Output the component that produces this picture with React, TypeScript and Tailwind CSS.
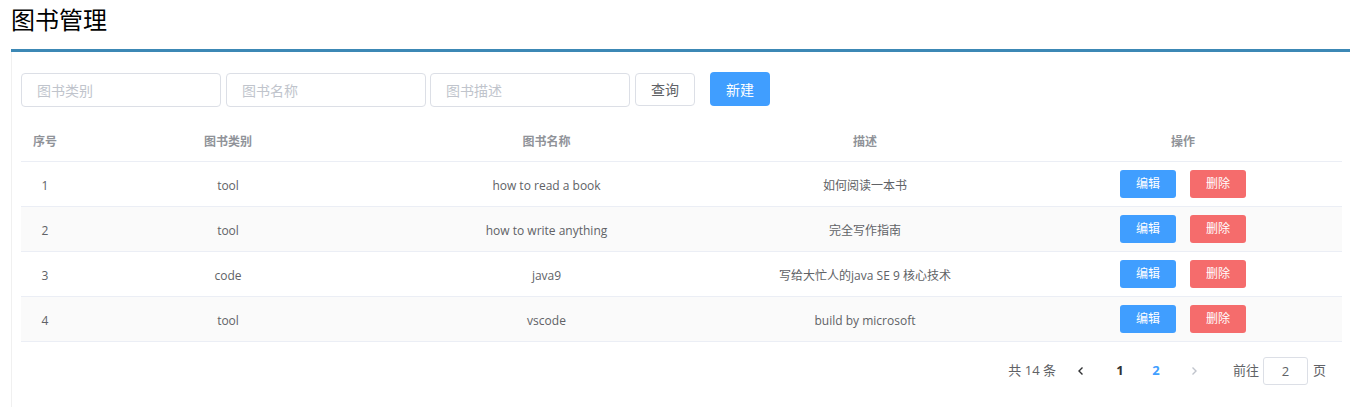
import React from "react";

const rows = [
  { id: 1, cat: "tool", name: "how to read a book", desc: "如何阅读一本书" },
  { id: 2, cat: "tool", name: "how to write anything", desc: "完全写作指南" },
  { id: 3, cat: "code", name: "java9", desc: "写给大忙人的java SE 9 核心技术" },
  { id: 4, cat: "tool", name: "vscode", desc: "build by microsoft" },
];

const font = {
  fontFamily: '"Open Sans", "Noto Sans CJK SC", sans-serif',
};

export default function App() {
  return (
    <div className="w-[1350px] h-[407px] bg-white pl-[11px] overflow-hidden" style={font}>
      <div className="h-[49px] pt-[2px]">
        <h1 className="text-[24px] leading-[36px] text-black font-normal">图书管理</h1>
      </div>
      <div className="h-[3px] bg-[#3c88b5]" />
      <div className="border-l border-[#f0f0f0] pl-[9px] pt-[21px] pr-[8px] h-[400px]">
        <div className="flex items-start h-[34px]">
          <input
            placeholder="图书类别"
            className="w-[200px] h-[34px] border border-[#dcdfe6] rounded-[4px] pl-[15px] text-[14px] text-[#606266] placeholder:text-[#c0c4cc] outline-none"
          />
          <input
            placeholder="图书名称"
            className="ml-[5px] w-[200px] h-[34px] border border-[#dcdfe6] rounded-[4px] pl-[15px] text-[14px] text-[#606266] placeholder:text-[#c0c4cc] outline-none"
          />
          <input
            placeholder="图书描述"
            className="ml-[4px] w-[200px] h-[34px] border border-[#dcdfe6] rounded-[4px] pl-[15px] text-[14px] text-[#606266] placeholder:text-[#c0c4cc] outline-none"
          />
          <button className="ml-[5px] w-[60px] h-[33px] border border-[#dcdfe6] rounded-[4px] bg-white text-[14px] text-[#606266]">
            查询
          </button>
          <button className="ml-[15px] -mt-[1px] w-[60px] h-[34px] rounded-[4px] bg-[#409eff] text-[14px] text-white">
            新建
          </button>
        </div>
        <div className="mt-[13px] w-[1321px]">
          <div className="flex h-[42px] pt-[2px] border-b border-[#ebeef5] text-[12px] font-bold text-[#909399] items-center">
            <div className="w-[48px] text-center">序号</div>
            <div className="w-[318px] text-center">图书类别</div>
            <div className="w-[319px] text-center">图书名称</div>
            <div className="w-[318px] text-center">描述</div>
            <div className="w-[318px] text-center">操作</div>
          </div>
          {rows.map((r, i) => (
            <div
              key={r.id}
              className={`flex h-[45px] border-b border-[#ebeef5] items-center text-[12px] text-[#606266] ${i % 2 === 1 ? "bg-[#fafafa]" : "bg-white"}`}
            >
              <div className="w-[48px] pt-[3px] text-center">{r.id}</div>
              <div className="w-[318px] pt-[3px] text-center">{r.cat}</div>
              <div className="w-[319px] pt-[3px] text-center">{r.name}</div>
              <div className="w-[318px] pt-[3px] text-center">{r.desc}</div>
              <div className="w-[318px] flex justify-center gap-[14px]">
                <button className="w-[56px] h-[28px] rounded-[3px] bg-[#409eff] text-white text-[12px]">编辑</button>
                <button className="w-[56px] h-[28px] rounded-[3px] bg-[#f56c6c] text-white text-[12px]">删除</button>
              </div>
            </div>
          ))}
          <div className="flex justify-end items-center mt-[15px] h-[28px] pr-[16px] text-[13px] text-[#606266]">
            <span>共 14 条</span>
            <span className="ml-[7px] w-[36px] flex justify-center text-[#303133]">
              <svg width="10" height="10" viewBox="0 0 10 10" fill="none" stroke="currentColor" strokeWidth="1.4">
                <path d="M6.5 1.5 L3 5 L6.5 8.5" />
              </svg>
            </span>
            <span className="ml-[3px] w-[36px] text-center font-bold text-[#303133]">1</span>
            <span className="w-[36px] text-center font-bold text-[#409eff]">2</span>
            <span className="ml-[2px] w-[36px] flex justify-center text-[#c0c4cc]">
              <svg width="10" height="10" viewBox="0 0 10 10" fill="none" stroke="currentColor" strokeWidth="1.4">
                <path d="M3.5 1.5 L7 5 L3.5 8.5" />
              </svg>
            </span>
            <span className="ml-[21px]">前往</span>
            <input
              defaultValue="2"
              className="ml-[4px] w-[45px] h-[28px] border border-[#dcdfe6] rounded-[3px] text-center text-[13px] text-[#606266] outline-none"
            />
            <span className="ml-[5px]">页</span>
          </div>
        </div>
      </div>
    </div>
  );
}
